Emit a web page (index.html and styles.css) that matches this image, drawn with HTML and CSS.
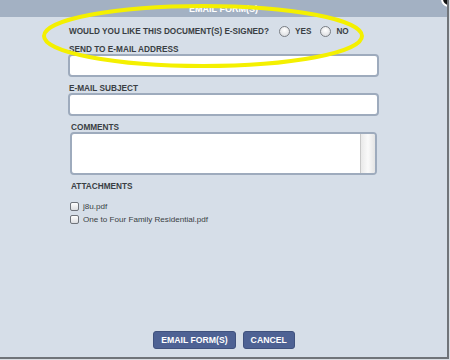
FILE: index.html
```html
<!DOCTYPE html>
<html lang="en">
<head>
    <meta charset="UTF-8">
    <title>Email Form(s)</title>
    <link rel="stylesheet" href="styles.css">
</head>
<body>
    <div class="dialog">
        <div class="header">
            <h1>EMAIL FORM(S)</h1>
        </div>
        <span class="close"></span>

        <div class="content">
            <div class="question">
                <span>WOULD YOU LIKE THIS DOCUMENT(S) E-SIGNED?</span>
                <label class="radio"><span class="radio-dot"></span>YES</label>
                <label class="radio"><span class="radio-dot"></span>NO</label>
            </div>

            <div class="field">
                <label class="field-label">SEND TO E-MAIL ADDRESS</label>
                <div class="input"></div>
            </div>

            <div class="field">
                <label class="field-label">E-MAIL SUBJECT</label>
                <div class="input"></div>
            </div>

            <div class="field field-inset">
                <label class="field-label">COMMENTS</label>
                <div class="textarea">
                    <div class="scrollbar"></div>
                </div>
            </div>

            <div class="attachments">
                <div class="field-label">ATTACHMENTS</div>
                <ul class="files">
                    <li><span class="checkbox"></span>j8u.pdf</li>
                    <li><span class="checkbox"></span>One to Four Family Residential.pdf</li>
                </ul>
            </div>
        </div>

        <div class="footer">
            <button class="btn">EMAIL FORM(S)</button>
            <button class="btn">CANCEL</button>
        </div>

        <!-- highlight drawn over the question -->
        <svg class="highlight" width="340" height="70" viewBox="0 0 340 70">
            <ellipse cx="162" cy="33" rx="159" ry="30" fill="none" stroke="#f4f000" stroke-width="4"/>
        </svg>
    </div>
</body>
</html>
```

FILE: styles.css
```css
/* Base */
body {
    margin: 0;
    background: #d9dde2;
    font-family: "Liberation Sans", Arial, sans-serif;
    color: #3a3e44;
}

.dialog {
    position: relative;
    width: 447px;
    height: 357px;
    background: #d6dee8;
    border-right: 2px solid #707479;
    border-bottom: 2px solid #707479;
    display: flex;
    flex-direction: column;
    overflow: hidden;
}

/* Header */
.header {
    height: 17px;
    background: #a3b1c3;
    text-align: center;
}

.header h1 {
    margin: 0;
    padding-top: 1px;
    color: #ffffff;
    font-size: 9px;
    font-weight: 700;
    line-height: 17px;
}

.close {
    position: absolute;
    top: -9px;
    right: -10px;
    width: 12px;
    height: 12px;
    border-radius: 50%;
    background: #111;
    border: 2px solid #fff;
}

/* Form */
.content {
    flex: 1;
    padding: 7px 68px 0 68px;
    display: flex;
    flex-direction: column;
}

.question {
    display: flex;
    align-items: center;
    height: 15px;
    padding-left: 1px;
    font-size: 8.2px;
    font-weight: 700;
}

.radio {
    display: flex;
    align-items: center;
    margin-left: 10px;
}

.radio + .radio {
    margin-left: 9px;
}

.radio-dot {
    width: 9px;
    height: 9px;
    margin-right: 5px;
    border-radius: 50%;
    border: 1px solid #7a7e84;
    background: radial-gradient(circle at 50% 35%, #ffffff, #d4d6da);
}

.field {
    display: flex;
    flex-direction: column;
    margin-top: 6px;
}

.field + .field {
    margin-top: 7px;
}

.field-label {
    padding-left: 1px;
    font-size: 8.25px;
    font-weight: 700;
    line-height: 9px;
}

.input {
    height: 19px;
    width: 307px;
    background: #ffffff;
    border: 2px solid #9eabbd;
    border-radius: 4px;
}

.field-inset {
    padding-left: 2px;
}

.textarea {
    height: 39px;
    width: 303px;
    background: #ffffff;
    border: 2px solid #9eabbd;
    border-radius: 4px;
    display: flex;
    justify-content: flex-end;
    overflow: hidden;
}

.scrollbar {
    width: 14px;
    border-left: 1px solid #c8c8c8;
    background: linear-gradient(90deg, #e9e9e9, #fafafa 50%, #e4e4e4);
}

/* Attachments */
.attachments {
    margin-top: 7px;
    padding-left: 2px;
}

.files {
    list-style: none;
    margin: 9px 0 0 0;
    padding: 0;
    font-size: 8.1px;
}

.files li {
    display: flex;
    align-items: center;
    height: 13px;
}

.checkbox {
    width: 7px;
    height: 7px;
    margin-right: 4px;
    border: 1px solid #6f737a;
    border-radius: 2px;
    background: linear-gradient(#ffffff, #dcdde0);
}

/* Footer */
.footer {
    display: flex;
    justify-content: center;
    gap: 7px;
    padding: 0 0 8px 1px;
}

.btn {
    height: 18px;
    padding: 0 7px;
    border: 1px solid #40527e;
    border-radius: 3px;
    background: #4e6294;
    color: #ffffff;
    font-family: "Liberation Sans", Arial, sans-serif;
    font-size: 8.7px;
    font-weight: 700;
    cursor: pointer;
}

/* Highlight overlay */
.highlight {
    position: absolute;
    top: 3px;
    left: 41px;
}
```
